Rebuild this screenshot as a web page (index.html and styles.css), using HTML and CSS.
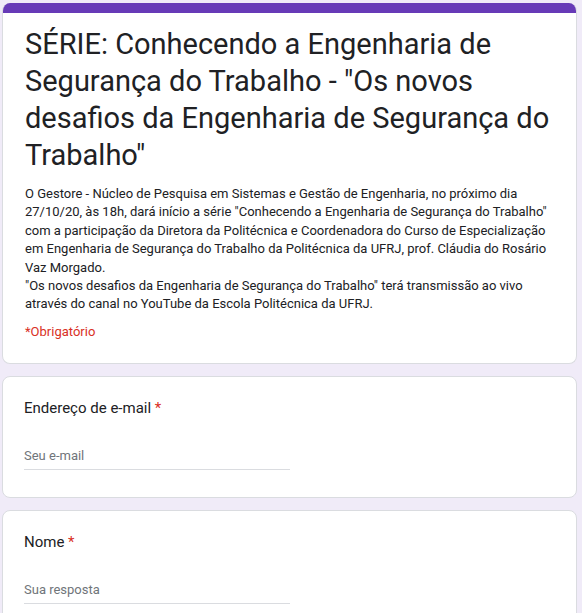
FILE: index.html
```html
<!DOCTYPE html>
<html lang="pt-BR">
<head>
<meta charset="utf-8">
<title>SÉRIE: Conhecendo a Engenharia de Segurança do Trabalho</title>
<link rel="stylesheet" href="styles.css">
</head>
<body>
<main class="form">
  <section class="card header-card">
    <div class="accent"></div>
    <div class="header-body">
      <h1 class="title">SÉRIE: Conhecendo a Engenharia de Segurança do Trabalho - "Os novos desafios da Engenharia de Segurança do Trabalho"</h1>
      <div class="desc">O Gestore - Núcleo de Pesquisa em Sistemas e Gestão de Engenharia, no próximo dia 27/10/20, às 18h, dará início a série "Conhecendo a Engenharia de Segurança do Trabalho" com a participação da Diretora da Politécnica e Coordenadora do Curso de Especialização em Engenharia de Segurança do Trabalho da Politécnica da UFRJ, prof. Cláudia do Rosário Vaz Morgado.<br>"Os novos desafios da Engenharia de Segurança do Trabalho" terá transmissão ao vivo através do canal no YouTube da Escola Politécnica da UFRJ.</div>
      <div class="required-note">*Obrigatório</div>
    </div>
  </section>
  <section class="card question">
    <div class="q-title">Endereço de e-mail <span class="star">*</span></div>
    <div class="input">Seu e-mail</div>
  </section>
  <section class="card question">
    <div class="q-title">Nome <span class="star">*</span></div>
    <div class="input">Sua resposta</div>
  </section>
</main>
</body>
</html>
```

FILE: styles.css
```css
html, body {
  margin: 0;
  padding: 0;
  background: #f0ebf8;
}
body {
  font-family: Roboto, "Liberation Sans", Arial, sans-serif;
  color: #202124;
}
.form {
  display: flex;
  flex-direction: column;
  gap: 12px;
  padding: 3px 5px 0 2px;
}
.card {
  background: #fff;
  border: 1px solid #dadce0;
  border-radius: 8px;
  overflow: hidden;
}
.header-card {
  border-top: none;
}
.accent {
  height: 10px;
  background: #673ab7;
}
.header-body {
  padding: 13px 24px 22px 22px;
}
.title {
  margin: 0;
  font-weight: 400;
  font-size: 29px;
  line-height: 37px;
  color: #202124;
}
.desc {
  margin-top: 11px;
  font-size: 13px;
  line-height: 18.4px;
  color: #202124;
}
.required-note {
  margin-top: 9px;
  font-size: 13px;
  line-height: 18px;
  color: #d93025;
}
.question {
  padding: 19px 24px 27px 21px;
}
.q-title {
  font-size: 15px;
  line-height: 24px;
  color: #202124;
}
.star {
  color: #d93025;
}
.input {
  margin-top: 24px;
  width: 266px;
  font-size: 13px;
  line-height: 18px;
  padding: 3px 0 4px;
  color: #70757a;
  border-bottom: 1px solid #dadce0;
}
```
